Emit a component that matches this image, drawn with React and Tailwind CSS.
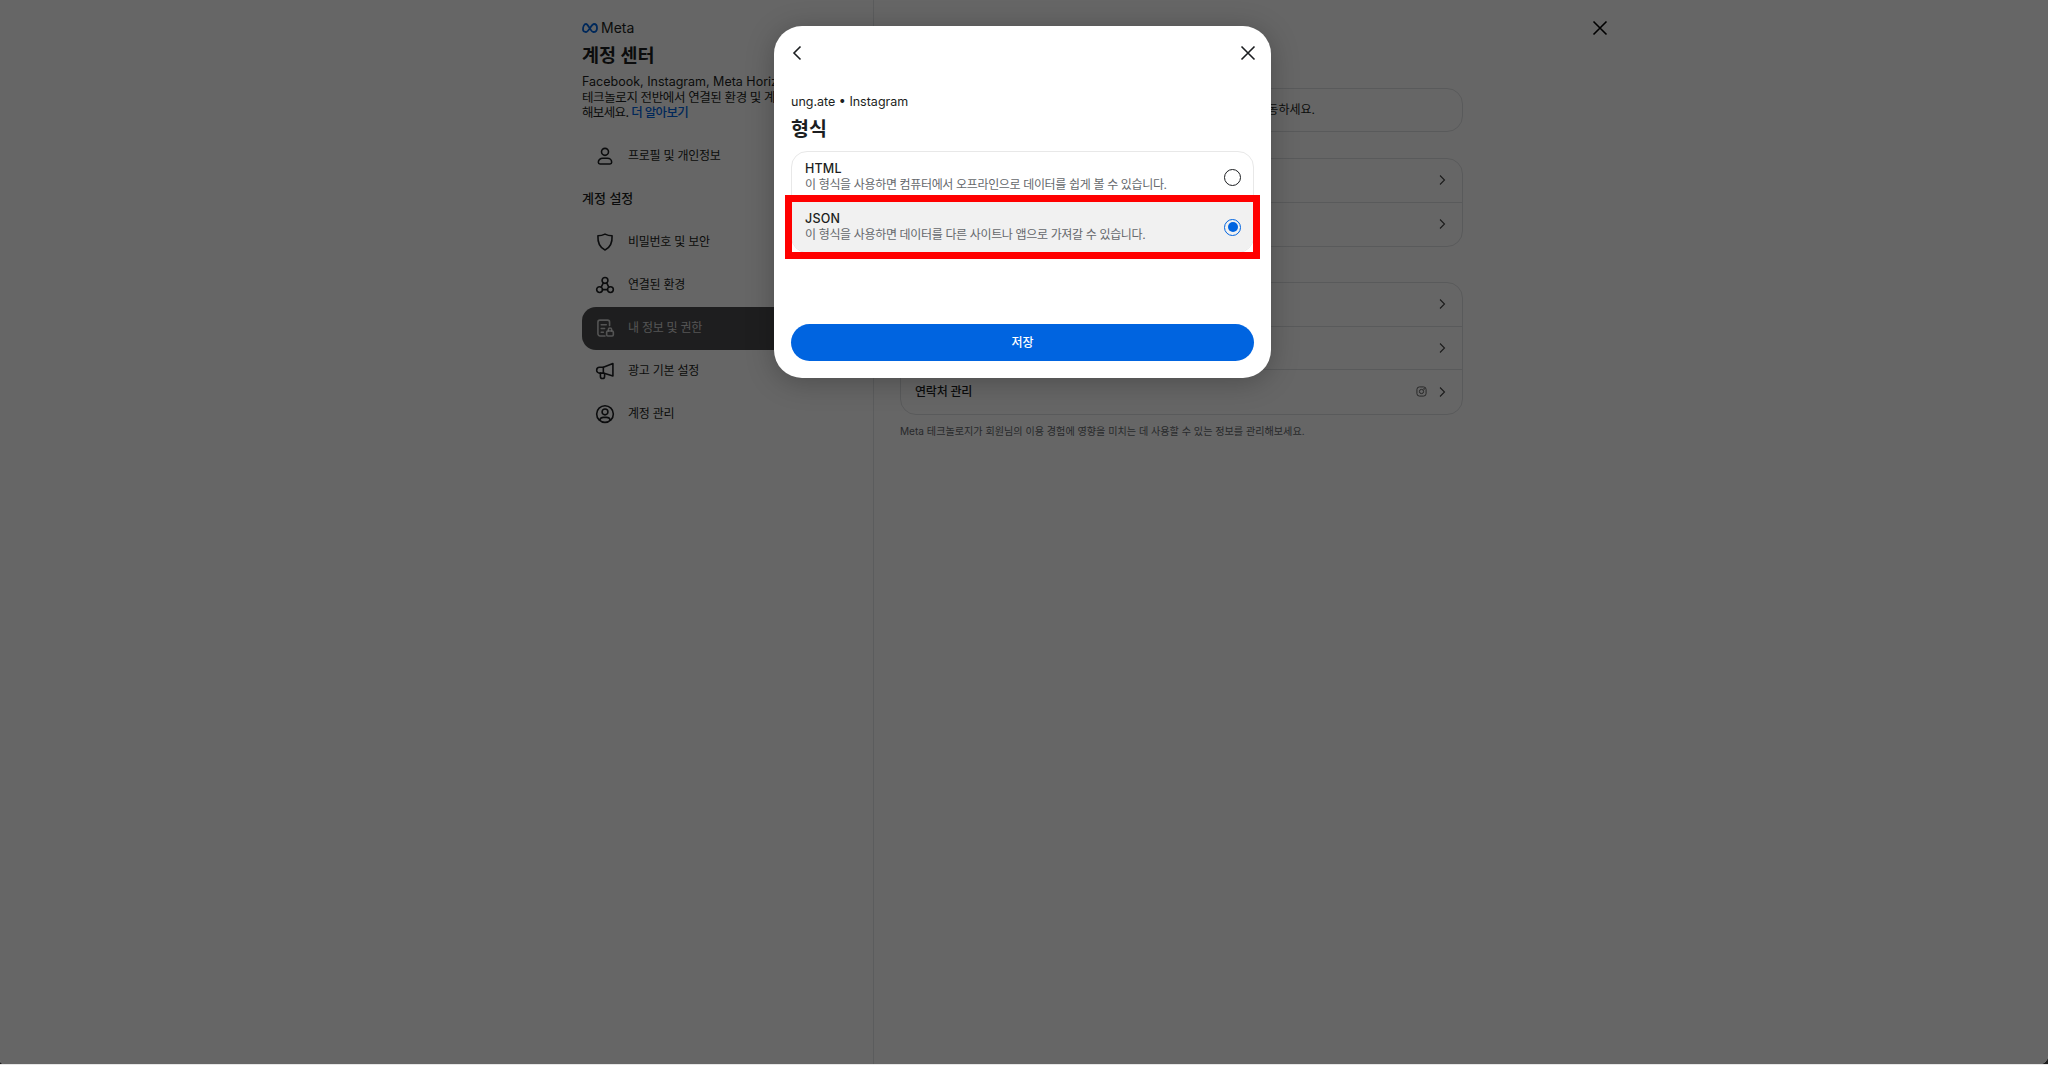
import React from "react";

const Chevron = ({ className }) => (
  <svg viewBox="0 0 12 12" className={className} fill="none" stroke="currentColor" strokeWidth="1.1">
    <path d="M4 1.5 8.5 6 4 10.5" />
  </svg>
);

const CloseIcon = ({ className }) => (
  <svg viewBox="0 0 16 16" className={className} fill="none" stroke="currentColor" strokeWidth="1.6">
    <path d="M1.5 1.5 14.500 14.500M14.500 1.500 1.500 14.500" />
  </svg>
);

const MetaLogo = () => (
  <svg viewBox="0 0 16 10" className="h-[10px] w-[16px] text-[#0064e0]" fill="none" stroke="currentColor" strokeWidth="1.8">
    <path d="M1 6.500C1 3.500 2.300 1 4 1c2.300 0 4.800 8 7.300 8C13.500 9 15 7.500 15 5.200 15 2.800 13.800 1 12 1 9.500 1 6.800 9 3.800 9 2.100 9 1 8.200 1 6.500Z" />
  </svg>
);

const Icon = ({ children }) => (
  <svg viewBox="0 0 24 24" className="h-[20px] w-[20px] shrink-0" fill="none" stroke="currentColor" strokeWidth="1.9" strokeLinecap="round" strokeLinejoin="round">
    {children}
  </svg>
);

const UserIcon = () => (
  <Icon>
    <circle cx="12" cy="7" r="4.200" />
    <path d="M4 19.500c0-3 2.500-4.800 5-4.800h6c2.500 0 5 1.800 5 4.800 0 1.200-.8 2-2 2H6c-1.200 0-2-.8-2-2Z" />
  </Icon>
);

const ShieldIcon = () => (
  <Icon>
    <path d="M12 2.500c3 1.500 5.500 2 8.500 2 .4 8-1.500 14-8.500 17-7-3-8.900-9-8.500-17 3 0 5.500-.5 8.500-2Z" />
  </Icon>
);

const NetworkIcon = () => (
  <Icon>
    <circle cx="12" cy="6.500" r="3.500" />
    <circle cx="5.500" cy="17.500" r="3.500" />
    <circle cx="18.500" cy="17.500" r="3.500" />
    <path d="M10 9.500 7.500 14.500M14 9.500l2.500 5M9 17.500h6" />
  </Icon>
);

const InfoLockIcon = () => (
  <Icon>
    <path d="M12 21.500H6a2.500 2.500 0 0 1-2.500-2.500V5A2.500 2.500 0 0 1 6 2.500h9A2.500 2.500 0 0 1 17.500 5v4" />
    <path d="M7.500 8h6M7.500 12.500h4M7.500 17h2.500" />
    <rect x="14" y="15.500" width="8" height="6" rx="1.500" />
    <path d="M16 15.500V14a2 2 0 0 1 4 0v1.500" />
  </Icon>
);

const MegaphoneIcon = () => (
  <Icon>
    <path d="M21.500 3v15L10 14.500H5.500a3.500 3.500 0 0 1 0-7H10L21.500 3Z" />
    <path d="M10 7.500v7M6.500 14.500v4a2.500 2.500 0 0 0 5 0V15" />
  </Icon>
);

const AccountIcon = () => (
  <Icon>
    <circle cx="12" cy="12" r="10" />
    <circle cx="12" cy="9.500" r="3.500" />
    <path d="M5.500 19.500c1-3 3-3.500 4.500-3.500h4c1.500 0 3.500.5 4.500 3.500" />
  </Icon>
);

const InstagramIcon = () => (
  <svg viewBox="0 0 12 12" className="h-[11px] w-[11px] text-[#555]" fill="none" stroke="currentColor" strokeWidth="1">
    <rect x="1" y="1" width="10" height="10" rx="2.800" />
    <circle cx="6" cy="6" r="2.300" />
    <circle cx="8.800" cy="3.200" r=".4" fill="currentColor" />
  </svg>
);

const NavRow = ({ icon, label, active }) => (
  <div className={`flex h-[43px] items-center gap-[13px] rounded-[14px] pl-[13px] text-[12px] tracking-[-0.25px] ${active ? "bg-[#4c4d4e] text-white/75" : "text-[#1c1e21]"}`}>
    {icon}
    <span>{label}</span>
  </div>
);

const Row = ({ label, children }) => (
  <div className="flex h-[43.500px] items-center justify-between border-b border-[#dfe1e3] pl-[14px] pr-[14px] text-[12px] font-medium tracking-[-0.2px] text-[#1c1e21] last:border-b-0">
    <span>{label}</span>
    <div className="flex items-center gap-[9px] text-[#444]">
      {children}
      <Chevron className="h-[12px] w-[12px]" />
    </div>
  </div>
);

const Option = ({ title, desc, selected }) => (
  <div className={selected ? "relative outline-[7px] outline-[#ff0000]" : ""}>
    <div className={`flex h-[50px] items-center justify-between pl-[13px] pr-[12px] ${selected ? "rounded-b-[15px] bg-[#f1f1f1]" : ""}`}>
      <div className="-mt-px">
        <div className="text-[12.500px] font-medium leading-[17px] tracking-[0.2px] text-[#1c1e21]">{title}</div>
        <div className="text-[12px] leading-[16px] tracking-[-0.35px] text-[#65686c]">{desc}</div>
      </div>
      {selected ? (
        <div className="flex h-[17px] w-[17px] items-center justify-center rounded-full border-[1.500px] border-[#0064e0]">
          <div className="h-[10px] w-[10px] rounded-full bg-[#0064e0]" />
        </div>
      ) : (
        <div className="h-[17px] w-[17px] rounded-full border-[1.500px] border-[#1c1e21]" />
      )}
    </div>
  </div>
);

export default function App() {
  return (
    <div className="relative flex h-[1065px] flex-col overflow-hidden bg-[#1c1c1c] font-['Inter','Noto_Sans_CJK_KR',sans-serif] text-[#1c1e21]">
      <div className="flex flex-1 rounded-bl-[4px] rounded-br-[8px] bg-white pl-[582px]">
        {/* sidebar */}
        <aside className="w-[292px] shrink-0 border-r border-[#e4e6e8] pt-[21px]">
          <div className="flex h-[14px] items-center gap-[3px] text-[14px] leading-none">
            <MetaLogo />
            <span>Meta</span>
          </div>
          <h1 className="mt-[7px] text-[18.500px] font-bold leading-[26px]">계정 센터</h1>
          <p className="mt-[6px] w-[300px] text-[12.500px] leading-[15.500px]">
            <span className="block whitespace-nowrap">Facebook, Instagram, Meta Horizon 등 Meta</span>
            <span className="block whitespace-nowrap tracking-[-0.4px]">테크놀로지 전반에서 연결된 환경 및 계정 설정을 관리</span>
            <span className="block whitespace-nowrap tracking-[-0.65px]">해보세요. <span className="font-medium text-[#0064e0]">더 알아보기</span></span>
          </p>
          <div className="mt-[14px] pr-[24px]">
            <NavRow icon={<UserIcon />} label="프로필 및 개인정보" />
            <h2 className="flex h-[43px] items-center text-[13px] font-medium">계정 설정</h2>
            <NavRow icon={<ShieldIcon />} label="비밀번호 및 보안" />
            <NavRow icon={<NetworkIcon />} label="연결된 환경" />
            <NavRow icon={<InfoLockIcon />} label="내 정보 및 권한" active />
            <NavRow icon={<MegaphoneIcon />} label="광고 기본 설정" />
            <NavRow icon={<AccountIcon />} label="계정 관리" />
          </div>
        </aside>

        {/* settings column */}
        <main className="ml-[26px] w-[563px] shrink-0 pt-[88px]">
          <div className="flex h-[44px] items-center justify-end rounded-[16px] border border-[#dfe1e3] pr-[147px] text-[12px]">
            <span className="whitespace-nowrap">계정 센터에서 내 정보 및 권한을 관리하려면 이 페이지로 이동하세요.</span>
          </div>
          <div className="mt-[26px] rounded-[16px] border border-[#dfe1e3]">
            <Row label="내 정보 내보내기" />
            <Row label="내 정보 액세스" />
          </div>
          <div className="mt-[35px] rounded-[16px] border border-[#dfe1e3]">
            <Row label="검색 기록" />
            <Row label="Meta 테크놀로지 외부 활동" />
            <Row label="연락처 관리">
              <InstagramIcon />
            </Row>
          </div>
          <p className="mt-[9px] text-[10.100px] leading-[14px] text-[#65686c]">
            Meta 테크놀로지가 회원님의 이용 경험에 영향을 미치는 데 사용할 수 있는 정보를 관리해보세요.
          </p>
        </main>
      </div>

      {/* dimmed overlay with page close button and dialog */}
      <div className="absolute inset-x-0 bottom-px top-0 z-10 flex justify-center rounded-bl-[4px] rounded-br-[8px] bg-black/60 pr-[3px] pt-[26px]">
        <button className="absolute left-[1592px] top-[20px] text-black">
          <CloseIcon className="h-[16px] w-[16px]" />
        </button>
        <div className="flex h-[352px] w-[497px] flex-col rounded-[28px] bg-white px-[17px] shadow-[0_4px_28px_rgba(0,0,0,0.25)]">
          <div className="flex h-[54px] items-center justify-between text-[#1c1e21]">
            <svg viewBox="0 0 12 16" className="h-[16px] w-[12px]" fill="none" stroke="currentColor" strokeWidth="1.6">
              <path d="M9.500 1.500 3 8l6.500 6.500" />
            </svg>
            <CloseIcon className="-mr-[2px] h-[16px] w-[16px]" />
          </div>
          <div className="mt-[14px] text-[12.500px] leading-[16px]">ung.ate • Instagram</div>
          <div className="mt-[6px] text-[19.500px] font-bold leading-[26px]">형식</div>
          <div className="mt-[9px] rounded-[16px] border border-[#e8e8e8]">
            <Option title="HTML" desc="이 형식을 사용하면 컴퓨터에서 오프라인으로 데이터를 쉽게 볼 수 있습니다." />
            <Option title="JSON" desc="이 형식을 사용하면 데이터를 다른 사이트나 앱으로 가져갈 수 있습니다." selected />
          </div>
          <button className="mt-[71px] h-[37px] rounded-full bg-[#0064e0] text-[12px] font-medium text-white">저장</button>
        </div>
      </div>
      <div className="relative z-20 h-px bg-[#e6e6e6]" />
    </div>
  );
}
